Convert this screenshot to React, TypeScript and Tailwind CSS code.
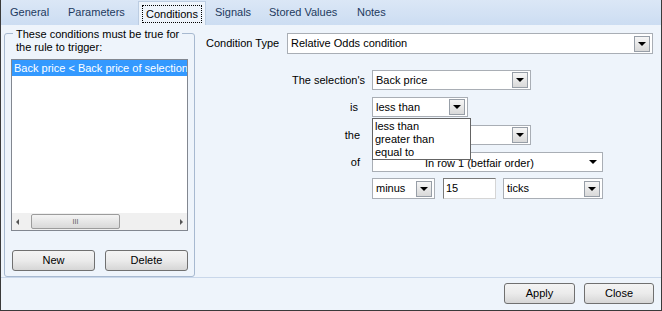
import React from "react";

function Arrow() {
  return (
    <div className="w-0 h-0 border-l-[4px] border-r-[4px] border-t-[4px] border-l-transparent border-r-transparent border-t-black" />
  );
}

function DropButton() {
  return (
    <div className="flex h-[16px] w-[16px] items-center justify-center border border-[#979ea7] bg-gradient-to-b from-[#f6f6f6] to-[#d9d9d9]">
      <Arrow />
    </div>
  );
}

function Combo({ value, width, children }: { value: string; width: string; children?: React.ReactNode }) {
  return (
    <div className={`relative flex h-[20px] items-center justify-between border border-[#a9aeb5] bg-white pl-[3px] pr-[2px] ${width}`}>
      <span className="whitespace-nowrap">{value}</span>
      <DropButton />
      {children}
    </div>
  );
}

function Button({ label, width }: { label: string; width: string }) {
  return (
    <div className={`flex h-[21px] items-center justify-center rounded-[3px] border border-[#707070] bg-gradient-to-b from-[#f4f4f4] via-[#ebebeb] to-[#d6d6d6] ${width}`}>
      {label}
    </div>
  );
}

const tabs = [
  { label: "General", w: "w-[58px]", pl: "pl-[9px]" },
  { label: "Parameters", w: "w-[79px]", pl: "pl-[9px]" },
  { label: "Conditions", w: "w-[68px]", pl: "pl-[3px]", active: true },
  { label: "Signals", w: "w-[56px]", pl: "pl-[9px]" },
  { label: "Stored Values", w: "w-[88px]", pl: "pl-[7px]" },
  { label: "Notes", w: "w-[50px]", pl: "pl-[7px]" },
];

export default function App() {
  return (
    <div className="flex h-[311px] w-[662px] flex-col overflow-hidden border-x border-b border-[#3a3a3a] bg-[#eef4fb] font-['Liberation_Sans',Arial,sans-serif] text-[11px] text-black">
      {/* tab strip */}
      <div className="flex h-[25px] items-end bg-gradient-to-b from-[#dbe7f6] to-[#ccddf2] text-[#1d3a5e]">
        {tabs.map((t) =>
          t.active ? (
            <div
              key={t.label}
              className={`flex h-[24px] items-center border-x border-t border-[#bccde2] bg-[#eef4fb] ${t.w} ${t.pl}`}
            >
              <span className="border border-dotted border-black px-[3px] leading-[16px] text-black">{t.label}</span>
            </div>
          ) : (
            <div key={t.label} className={`flex h-[25px] items-center ${t.w} ${t.pl}`}>
              {t.label}
            </div>
          )
        )}
      </div>

      {/* tab page */}
      <div className="flex h-[253px] border-b border-[#c9d7ea]">
        {/* group box */}
        <div className="relative ml-[3px] mt-[8px] flex h-[244px] w-[191px] flex-col rounded-[3px] border border-[#a7b9d0] pl-[6px] pt-[25px]">
          <div className="absolute left-[8px] top-[-6px] bg-[#eef4fb] px-[3px] leading-[13px]">
            These conditions must be true for
            <br />
            the rule to trigger:
          </div>
          <div className="flex h-[172px] w-[177px] flex-col border border-[#828790] bg-white">
            <div className="h-[16px] overflow-hidden whitespace-nowrap bg-[#3399ff] px-[2px] leading-[16px] text-white">
              Back price &lt; Back price of selection
            </div>
            <div className="flex-1" />
            <div className="flex h-[17px] items-center bg-[#f0f0f0] px-[4px]">
              <div className="h-0 w-0 border-y-[3px] border-r-[3px] border-y-transparent border-r-[#555]" />
              <div className="ml-[12px] flex h-[15px] w-[89px] items-center justify-center rounded-[2px] border border-[#9c9c9c] bg-gradient-to-b from-[#f4f4f4] to-[#d9d9d9] text-[7px] leading-none text-[#555]">
                III
              </div>
              <div className="flex-1" />
              <div className="h-0 w-0 border-y-[3px] border-l-[3px] border-y-transparent border-l-[#555]" />
            </div>
          </div>
          <div className="ml-[1px] mt-[19px] flex gap-[10px]">
            <Button label="New" width="w-[83px]" />
            <Button label="Delete" width="w-[83px]" />
          </div>
        </div>

        {/* right pane */}
        <div className="flex flex-1 flex-col pl-[11px] pt-[8px]">
          <div className="flex h-[21px] items-center">
            <div className="w-[81px]">Condition Type</div>
            <Combo value="Relative Odds condition" width="w-[366px] h-[21px]" />
          </div>

          <div className="mt-[16px] flex items-center">
            <div className="w-[166px] pr-[7px] text-right">The selection's</div>
            <Combo value="Back price" width="w-[159px]" />
          </div>

          <div className="relative z-10 mt-[7px] flex items-center">
            <div className="w-[166px] pr-[14px] text-right">is</div>
            <Combo value="less than" width="w-[96px]">
              <div className="absolute left-[-1px] top-[20px] flex w-[99px] flex-col border border-[#646464] bg-white pl-[2px] pt-[1px] leading-[13px]">
                <span>less than</span>
                <span>greater than</span>
                <span>equal to</span>
              </div>
            </Combo>
          </div>

          <div className="mt-[8px] flex items-center">
            <div className="w-[166px] pr-[12px] text-right">the</div>
            <Combo value="" width="w-[159px]" />
          </div>

          <div className="mt-[7px] flex items-center">
            <div className="w-[166px] pr-[12px] text-right">of</div>
            <div className="flex h-[20px] w-[231px] items-center justify-between border border-[#a9aeb5] bg-white pl-[52px] pr-[5px]">
              <span className="whitespace-nowrap pt-[3px]">In row 1 (betfair order)</span>
              <Arrow />
            </div>
          </div>

          <div className="mt-[6px] flex items-center pl-[166px]">
            <Combo value="minus" width="w-[63px] h-[21px]" />
            <div className="ml-[8px] flex h-[21px] w-[53px] items-center border border-t-[#7a7a7a] border-l-[#7a7a7a] border-b-[#d5d5d5] border-r-[#d5d5d5] bg-white pl-[2px]">
              15
            </div>
            <Combo value="ticks" width="ml-[7px] w-[100px] h-[21px]" />
          </div>
        </div>
      </div>

      {/* bottom bar */}
      <div className="flex flex-1 items-start justify-end gap-[9px] pr-[7px] pt-[5px]">
        <Button label="Apply" width="w-[71px] h-[21px]" />
        <Button label="Close" width="w-[70px] h-[21px]" />
      </div>
    </div>
  );
}
